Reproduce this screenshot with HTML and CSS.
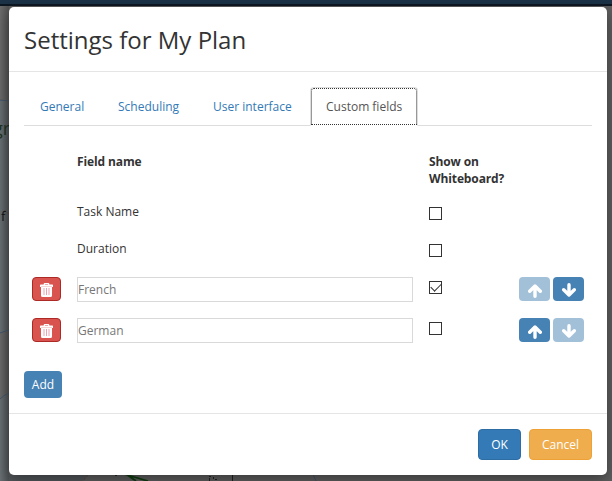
FILE: index.html
```html
<!DOCTYPE html>
<html lang="en">
<head>
<meta charset="utf-8">
<title>Settings for My Plan</title>
<link rel="stylesheet" href="styles.css">
</head>
<body>
<svg class="icon-defs" aria-hidden="true">
  <symbol id="trash" viewBox="0 0 13 14">
    <path fill="#fff" fill-rule="evenodd" d="M0 2.2Q0 1.5.6 1.5H3.7V.9Q3.700 0 4.600 0H8.400Q9.300 0 9.300.9V1.500H12.400Q13 1.500 13 2.200V4H0ZM5 1V1.600H8V1ZM1 3.800H12V12.500Q12 14 10.500 14H2.500Q1 14 1 12.500Z"/>
    <path fill="none" stroke="#ea9aa8" stroke-width=".9" d="M4 5V12M6.500 5V12M9 5V12"/>
  </symbol>
  <symbol id="arrow" viewBox="0 0 14 14">
    <path fill="none" stroke="#fff" stroke-width="3.4" stroke-linecap="round" stroke-linejoin="round" d="M7 2V12.200M1.700 7.300 7 2 12.300 7.300"/>
  </symbol>
</svg>
<div class="navbar"></div>
<svg class="canvas" viewBox="0 0 612 481" aria-hidden="true">
  <defs><linearGradient id="edge"><stop offset="0" stop-color="#6b6b6b"/><stop offset="1" stop-color="#525252"/></linearGradient>
  <linearGradient id="disc"><stop offset="0" stop-color="#697073"/><stop offset="1" stop-color="#4e5356"/></linearGradient></defs>
  <path fill="url(#edge)" d="M0 6H9V481H0Z"/>
  <path fill="url(#disc)" d="M0 100L9 101V331L0 333ZM0 399Q4 395 9 393V481H0Z"/>
  <path fill="none" stroke="#435568" d="M0 100L9 101M0 333L9 330M0 399Q4 395 9 393M313 474L316 481"/>
  <path fill="#54585b" d="M9 475H88L82 481H9Z"/>
  <path fill="none" stroke="#5a4b43" stroke-dasharray="3 1" d="M4 210L9 214M88 475L83 481"/>
  <path fill="none" stroke="#103d10" stroke-width="1.8" d="M124 474L148 481M126 474L136 481"/>
  <path fill="none" stroke="#222" d="M232.500 474V481"/>
  <path fill="#252525" d="M115 474h2v2h-2zM209 476h2v1h-2zM209 478h1v3h-1zM213 477h1v2h-1zM215 479h2v1h-2z"/>
  <text class="peek green" x="-7" y="135">gr</text>
  <text class="peek small" x="1" y="221">f</text>
</svg>
<main class="modal">
  <header class="modal-header"><h1>Settings for My Plan</h1></header>
  <section class="modal-body">
    <nav class="tabs">
      <a class="tab general">General</a>
      <a class="tab scheduling">Scheduling</a>
      <a class="tab interface">User interface</a>
      <a class="tab active">Custom fields</a>
    </nav>
    <div class="fields">
      <div class="row heading"><b class="name">Field name</b><b class="show">Show on Whiteboard?</b></div>
      <div class="row fixed"><span class="name">Task Name</span><input class="check" type="checkbox"></div>
      <div class="row fixed"><span class="name">Duration</span><input class="check" type="checkbox"></div>
      <div class="row custom">
        <button class="delete" aria-label="Delete"><svg><use href="#trash"/></svg></button>
        <input class="text" type="text" value="French">
        <input class="check" type="checkbox" checked>
        <div class="order"><button disabled aria-label="Up"><svg><use href="#arrow"/></svg></button><button class="down" aria-label="Down"><svg><use href="#arrow"/></svg></button></div>
      </div>
      <div class="row custom">
        <button class="delete" aria-label="Delete"><svg><use href="#trash"/></svg></button>
        <input class="text" type="text" value="German">
        <input class="check" type="checkbox">
        <div class="order"><button aria-label="Up"><svg><use href="#arrow"/></svg></button><button class="down" disabled aria-label="Down"><svg><use href="#arrow"/></svg></button></div>
      </div>
    </div>
    <button class="add">Add</button>
  </section>
  <footer class="modal-footer"><button class="ok">OK</button><button class="cancel">Cancel</button></footer>
</main>
</body>
</html>
```
FILE: styles.css
```css
* { box-sizing: border-box; }
body {
  margin: 0;
  height: 481px;
  overflow: hidden;
  background: #5f5f5f;
  color: #333;
  font: 12px/17px "Open Sans", sans-serif;
}
button, input { font: inherit; margin: 0; }
button { display: flex; align-items: center; justify-content: center; padding: 0; border: 0; border-radius: 4px; color: #fff; }
.icon-defs { position: absolute; width: 0; height: 0; }
.navbar { height: 6px; background: #1b3247; border-bottom: 2px solid #0d1722; }
.canvas { position: absolute; inset: 0; width: 612px; height: 481px; }
.peek { font-size: 18px; }
.peek.green { fill: #203324; }
.peek.small { font-size: 13px; fill: #111; }
.modal {
  position: relative;
  width: 598px;
  height: 468px;
  margin: 1px 0 0 9px;
  background: #fff;
  border-radius: 5px;
  box-shadow: 0 5px 15px rgba(0, 0, 0, .4);
}
.modal-header { height: 65px; padding: 16px 15px 0; border-bottom: 1px solid #e5e5e5; }
h1 { margin: 0; font-size: 24px; line-height: 34px; font-weight: 400; }
.modal-body { height: 341px; padding: 15px 15px 0; }
.tabs { display: flex; gap: 2px; height: 39px; border-bottom: 1px solid #ddd; }
.tab { height: 39px; padding: 11px 0 0 16px; color: #337ab7; white-space: nowrap; }
.general { width: 76px; }
.scheduling { width: 93px; }
.interface { width: 111px; }
.tab.active {
  width: 108px;
  padding: 10px 0 0 15px;
  border: 1px solid #ddd;
  border-bottom-color: #fff;
  border-radius: 4px 4px 0 0;
  color: #555;
  outline: 1px dotted #333;
  outline-offset: -2px;
}
.fields { padding: 27px 8px 0; }
.row { display: grid; grid-template-columns: 29px 336px 74px 65px; column-gap: 16px; align-items: start; }
.name { grid-column: 2; }
b { letter-spacing: -.12px; }
.heading { height: 51px; }
.show { width: 80px; }
.fixed { height: 37px; }
.fixed .name { margin-top: -1px; }
.fixed:nth-child(3) { height: 36px; }
.fixed .check { margin-top: 3px; }
.custom { height: 41px; }
.custom .check { margin-top: 4px; }
.check { appearance: none; width: 13px; height: 13px; border: 1px solid #333; background: #fff; }
.check:checked {
  background: linear-gradient(#fff, #fff);
  display: grid;
}
.check:checked::before {
  content: "";
  width: 9px;
  height: 5px;
  margin: 1px 0 0 1px;
  border: solid #333;
  border-width: 0 0 1.3px 1.3px;
  transform: rotate(-45deg);
}
.delete { width: 29px; height: 24px; background: #d9534f; border: 1px solid #ac2925; }
.delete svg { width: 13px; height: 14px; margin-top: 1px; }
.text { width: 336px; height: 25px; padding: 0; border: 1px solid #d9d9d9; color: #777; outline: 0; }
.order { display: flex; gap: 3px; }
.order button { width: 31px; height: 24px; background: #4682b4; }
.order button:disabled { background: #a3c0d9; }
.order svg { width: 14px; height: 14px; margin-top: 3px; }
.down svg { transform: rotate(180deg); margin-top: 1px; }
.add { width: 38px; height: 27px; margin-top: 12px; background: #4682b4; }
.modal-footer { display: flex; justify-content: flex-end; gap: 8px; height: 62px; padding: 15px 15px 0; border-top: 1px solid #e5e5e5; }
.modal-footer button { height: 31px; border: 1px solid; }
.modal-footer .ok { width: 43px; background: #337ab7; border-color: #2e6da4; }
.modal-footer .cancel { width: 63px; background: #f0ad4e; border-color: #eea236; }
```
